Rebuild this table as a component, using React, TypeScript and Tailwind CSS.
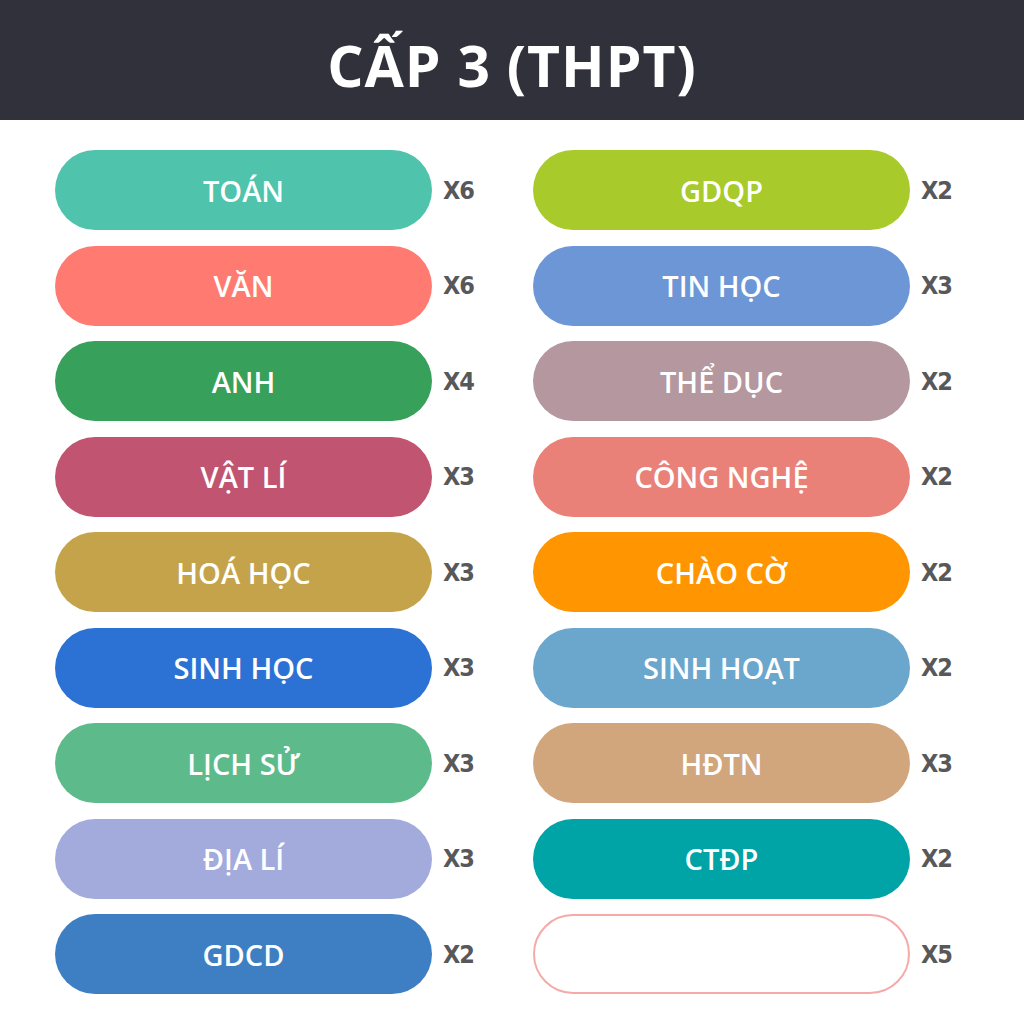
import React from "react";

type Item = { name: string; bg: string; count: string; empty?: boolean };

const left: Item[] = [
  { name: "Toán", bg: "bg-[#4fc3ac]", count: "X6" },
  { name: "Văn", bg: "bg-[#ff7b71]", count: "X6" },
  { name: "Anh", bg: "bg-[#37a05b]", count: "X4" },
  { name: "Vật Lí", bg: "bg-[#c15470]", count: "X3" },
  { name: "Hoá Học", bg: "bg-[#c4a34a]", count: "X3" },
  { name: "Sinh Học", bg: "bg-[#2b72d4]", count: "X3" },
  { name: "Lịch Sử", bg: "bg-[#5dbb8b]", count: "X3" },
  { name: "Địa Lí", bg: "bg-[#a3abdc]", count: "X3" },
  { name: "GDCD", bg: "bg-[#3e7fc3]", count: "X2" },
];

const right: Item[] = [
  { name: "GDQP", bg: "bg-[#a8ca2b]", count: "X2" },
  { name: "Tin Học", bg: "bg-[#6c96d6]", count: "X3" },
  { name: "Thể Dục", bg: "bg-[#b4979f]", count: "X2" },
  { name: "Công nghệ", bg: "bg-[#ea8179]", count: "X2" },
  { name: "Chào Cờ", bg: "bg-[#ff9500]", count: "X2" },
  { name: "Sinh Hoạt", bg: "bg-[#6ba6cc]", count: "X2" },
  { name: "HĐTN", bg: "bg-[#d2a67c]", count: "X3" },
  { name: "CTĐP", bg: "bg-[#00a3a6]", count: "X2" },
  { name: "", bg: "bg-white", count: "X5", empty: true },
];

function Row({ item }: { item: Item }) {
  return (
    <div className="flex items-center">
      <div
        className={`w-[377px] h-[80px] rounded-full flex items-center justify-center ${item.bg} ${
          item.empty ? "border-2 border-[#f4aaa9]" : ""
        }`}
      >
        <span
          className="text-white text-[29px] font-semibold uppercase leading-none"
          style={{ fontFamily: '"Open Sans", "Noto Sans", sans-serif' }}
        >
          {item.name}
        </span>
      </div>
      <div
        className="ml-[11px] w-[90px] text-[#58585a] text-[25px] font-semibold leading-none tracking-[-1px]"
        style={{ fontFamily: '"Liberation Sans Narrow", "DejaVu Sans Condensed", "Roboto", sans-serif' }}
      >
        {item.count}
      </div>
    </div>
  );
}

export default function App() {
  return (
    <div className="w-[1024px] h-[1024px] bg-white overflow-hidden">
      <div className="h-[120px] bg-[#31313b] flex items-center justify-center pt-[10px]">
        <h1
          className="text-white text-[57px] font-bold leading-none tracking-[1px]"
          style={{ fontFamily: '"Open Sans", "Noto Sans", sans-serif' }}
        >
          CẤP 3 (THPT)
        </h1>
      </div>
      <div className="flex pl-[55px] pt-[30px]">
        <div className="flex flex-col gap-[15.5px]">
          {left.map((it, i) => (
            <Row key={i} item={it} />
          ))}
        </div>
        <div className="flex flex-col gap-[15.5px]">
          {right.map((it, i) => (
            <Row key={i} item={it} />
          ))}
        </div>
      </div>
    </div>
  );
}
